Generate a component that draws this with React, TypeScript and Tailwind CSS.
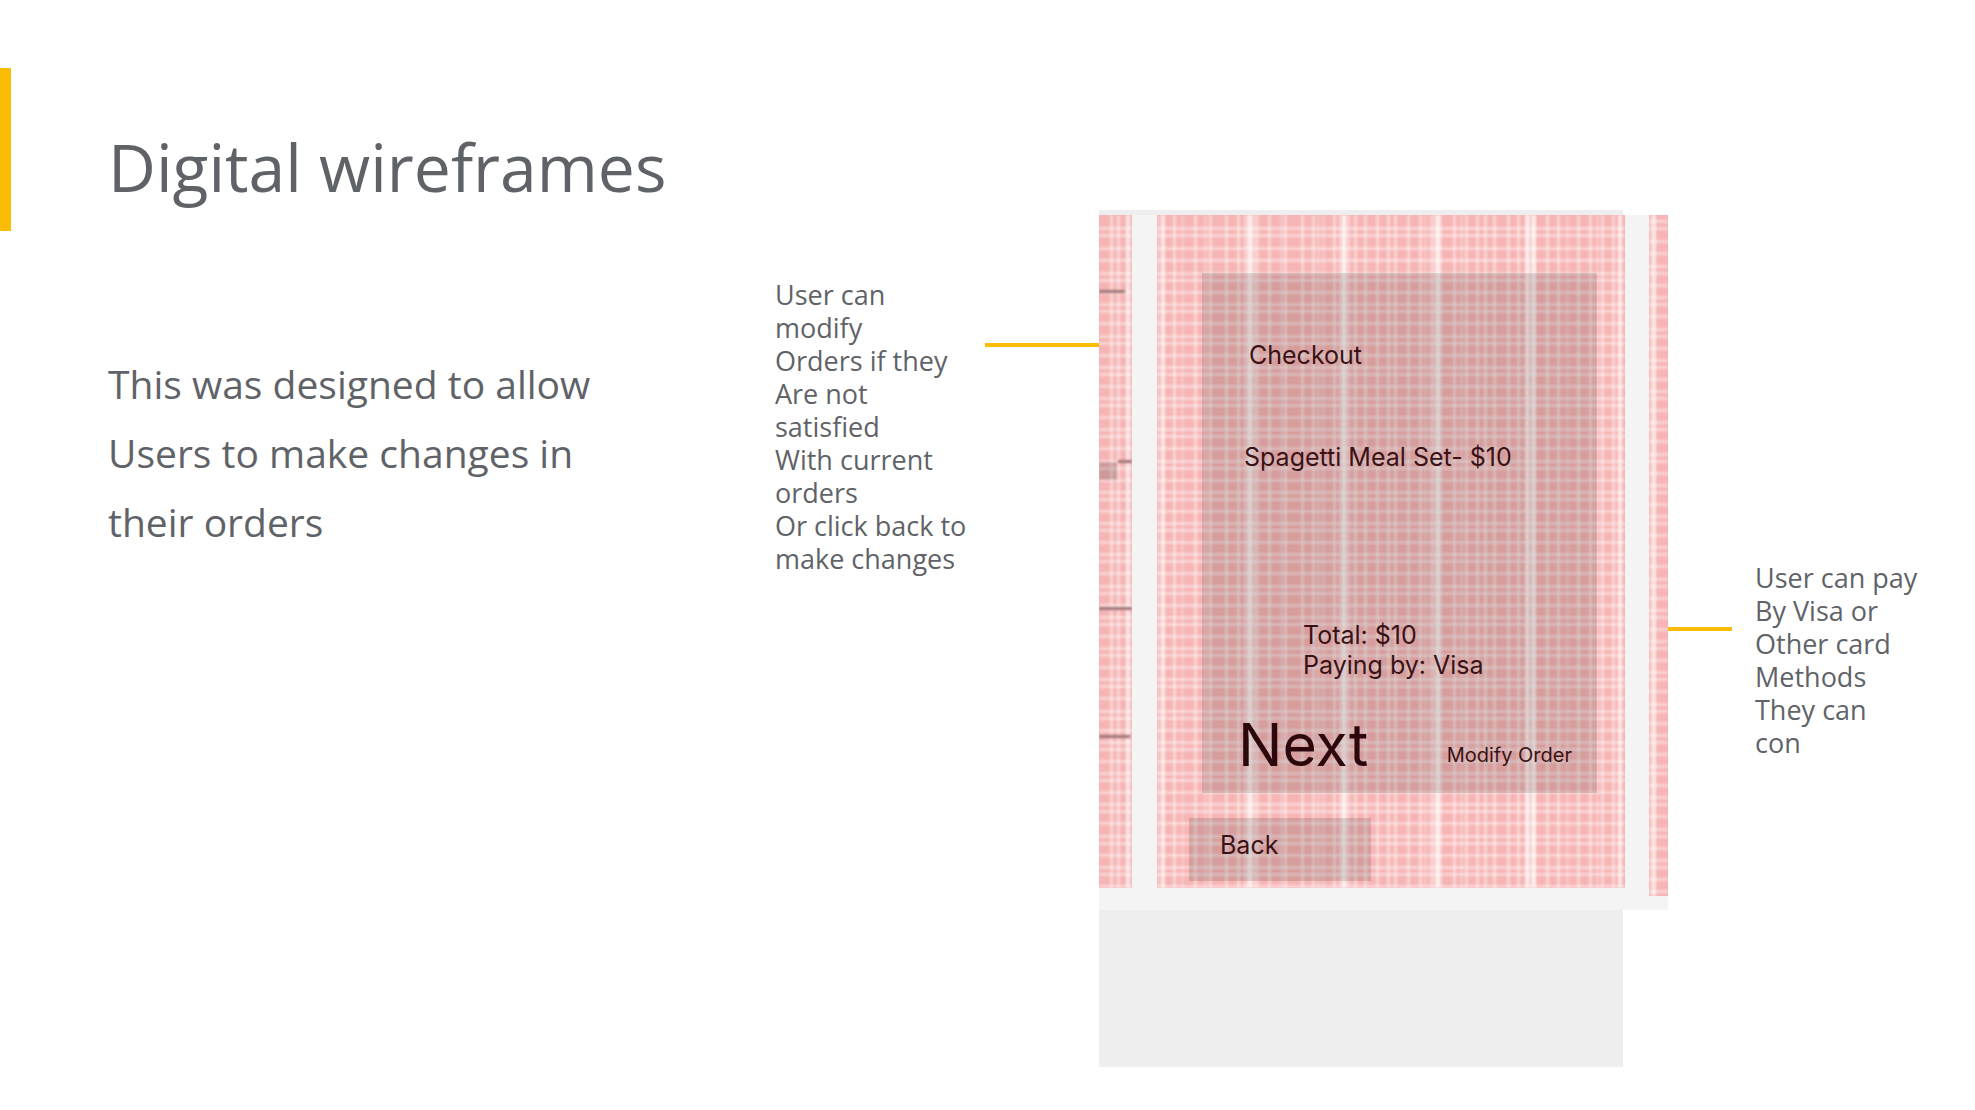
type Line = { at: number; size: number; alpha: number };

const thin = (at: number): Line => ({ at, size: 3, alpha: 0.42 });
const faint = (at: number): Line => ({ at, size: 3, alpha: 0.22 });
const strong = (at: number): Line => ({ at, size: 4, alpha: 0.65 });
const band = (at: number, size: number): Line => ({ at, size, alpha: 0.35 });

const mainColumns: Line[] = [
  faint(1), strong(6), thin(17), faint(25), thin(38), faint(48), thin(53), thin(69), thin(81),
  band(94, 15), strong(93),
  thin(112), faint(124), thin(128), thin(145), thin(156), faint(161), faint(166), thin(177),
  band(187, 11), strong(187),
  thin(198), thin(208), thin(220), thin(231), thin(238), thin(251), thin(263), faint(268),
  band(279, 12), strong(281),
  thin(297), faint(304), thin(309), thin(320), thin(328), thin(337), thin(351), thin(361),
  strong(370), band(374, 10), strong(377),
  thin(390), thin(401), faint(410), thin(421), thin(433), faint(440), thin(445), thin(456), strong(463),
];
const leftColumns: Line[] = [thin(12), thin(19), strong(29), faint(33)];
const rightColumns: Line[] = [faint(1), strong(5)];

const rowLines = (shift: number): Line[] => {
  const rows = [13, 20, 33, 45];
  for (let i = 0; i < 21; i++) {
    const start = 58 + i * 31.25;
    rows.push(Math.round(start), Math.round(start + 7), Math.round(start + 19));
  }
  return rows.map((y) => thin(y + shift));
};

function Mesh({ columns, shift = 0, children }: { columns: Line[]; shift?: number; children?: React.ReactNode }) {
  return (
    <div className="absolute inset-0 overflow-hidden" aria-hidden="true">
      <svg className="h-full w-full blur-[1px]">
        <g fill="#fff">
          {columns.map((l, i) => (
            <rect key={i} x={l.at - Math.floor(l.size / 2)} y="0" width={l.size} height="100%" opacity={l.alpha} />
          ))}
          {rowLines(shift).map((l, i) => (
            <rect key={i} x="0" y={l.at - 1} width="100%" height={l.size} opacity={l.alpha} />
          ))}
        </g>
        {children}
      </svg>
    </div>
  );
}

function Wireframe() {
  return (
    <div className="grid h-[695px] grid-cols-[33px_25px_468px_24px_19px] bg-[#f4f4f4] font-['Inter',sans-serif] text-[25px] leading-[30px] text-[#3a1216]">
      <div className="relative h-[673px] bg-[#f6b5b4]">
        <Mesh columns={leftColumns}>
          <g fill="#a07779">
            <rect x="0" y="75" width="26" height="3" />
            <rect x="19" y="245" width="14" height="3" />
            <rect x="0" y="392" width="33" height="3" />
            <rect x="0" y="520" width="31" height="3" />
          </g>
          <rect x="0" y="247" width="18" height="18" fill="#000" opacity=".16" />
        </Mesh>
      </div>
      <div />
      <div className="relative h-[673px] bg-[#f6b5b4] pt-[58px]">
        <Mesh columns={mainColumns} />
        <div className="relative ml-[45px] h-[520px] w-[395px] bg-black/13 pt-[67px]">
          <h2 className="ml-[47px]">Checkout</h2>
          <p className="ml-[42px] mt-[72px]">Spagetti Meal Set- $10</p>
          <p className="ml-[101px] mt-[148px]">Total: $10<br />Paying by: Visa</p>
          <div className="ml-[36px] mt-[35px] flex items-start justify-between pr-[25px]">
            <button type="button" className="text-[59px] leading-[60px] text-[#2c080c]">Next</button>
            <button type="button" className="mt-7 text-[20px] leading-[24px]">Modify Order</button>
          </div>
        </div>
        <button type="button" className="relative ml-[32px] mt-[25px] flex h-[63px] w-[182px] items-start bg-black/13 pl-[31px] pt-[12px]">Back</button>
      </div>
      <div />
      <div className="relative h-[681px] bg-[#f6b5b4]">
        <Mesh columns={rightColumns} shift={-7} />
      </div>
    </div>
  );
}

export default function App() {
  return (
    <main className="flex bg-white pb-[43px] font-['Open_Sans',sans-serif] text-[#5f6368]">
      <section className="min-w-[700px] flex-1">
        <div className="mt-[68px] h-[163px] border-l-[11px] border-[#fbbc04] pl-[97px] pt-[65px]">
          <h1 className="text-[66px] leading-[66px]">Digital wireframes</h1>
        </div>
        <p className="ml-[108px] mt-[118px] text-[39px] font-[375] leading-[69px]">
          This was designed to allow<br />Users to make changes in<br />their orders
        </p>
      </section>
      <p className="mt-[278px] w-[210px] shrink-0 text-[27px] leading-[33px]">
        User can<br />modify<br />Orders if they<br />Are not<br />satisfied<br />With current<br />orders<br />Or click back to<br />make changes
      </p>
      <div className="mt-[343px] h-1 w-[114px] shrink-0 bg-[#fbbc04]" />
      <figure className="mt-[210px] w-[569px] shrink-0">
        <div className="h-[5px] w-[524px] bg-[#eee]" />
        <Wireframe />
        <div className="h-[157px] w-[524px] bg-[#eee]" />
      </figure>
      <div className="mt-[627px] h-1 w-16 shrink-0 bg-[#fbbc04]" />
      <p className="mt-[561px] w-[243px] shrink-0 pl-[23px] text-[27px] leading-[33px]">
        User can pay<br />By Visa or<br />Other card<br />Methods<br />They can<br />con
      </p>
    </main>
  );
}
